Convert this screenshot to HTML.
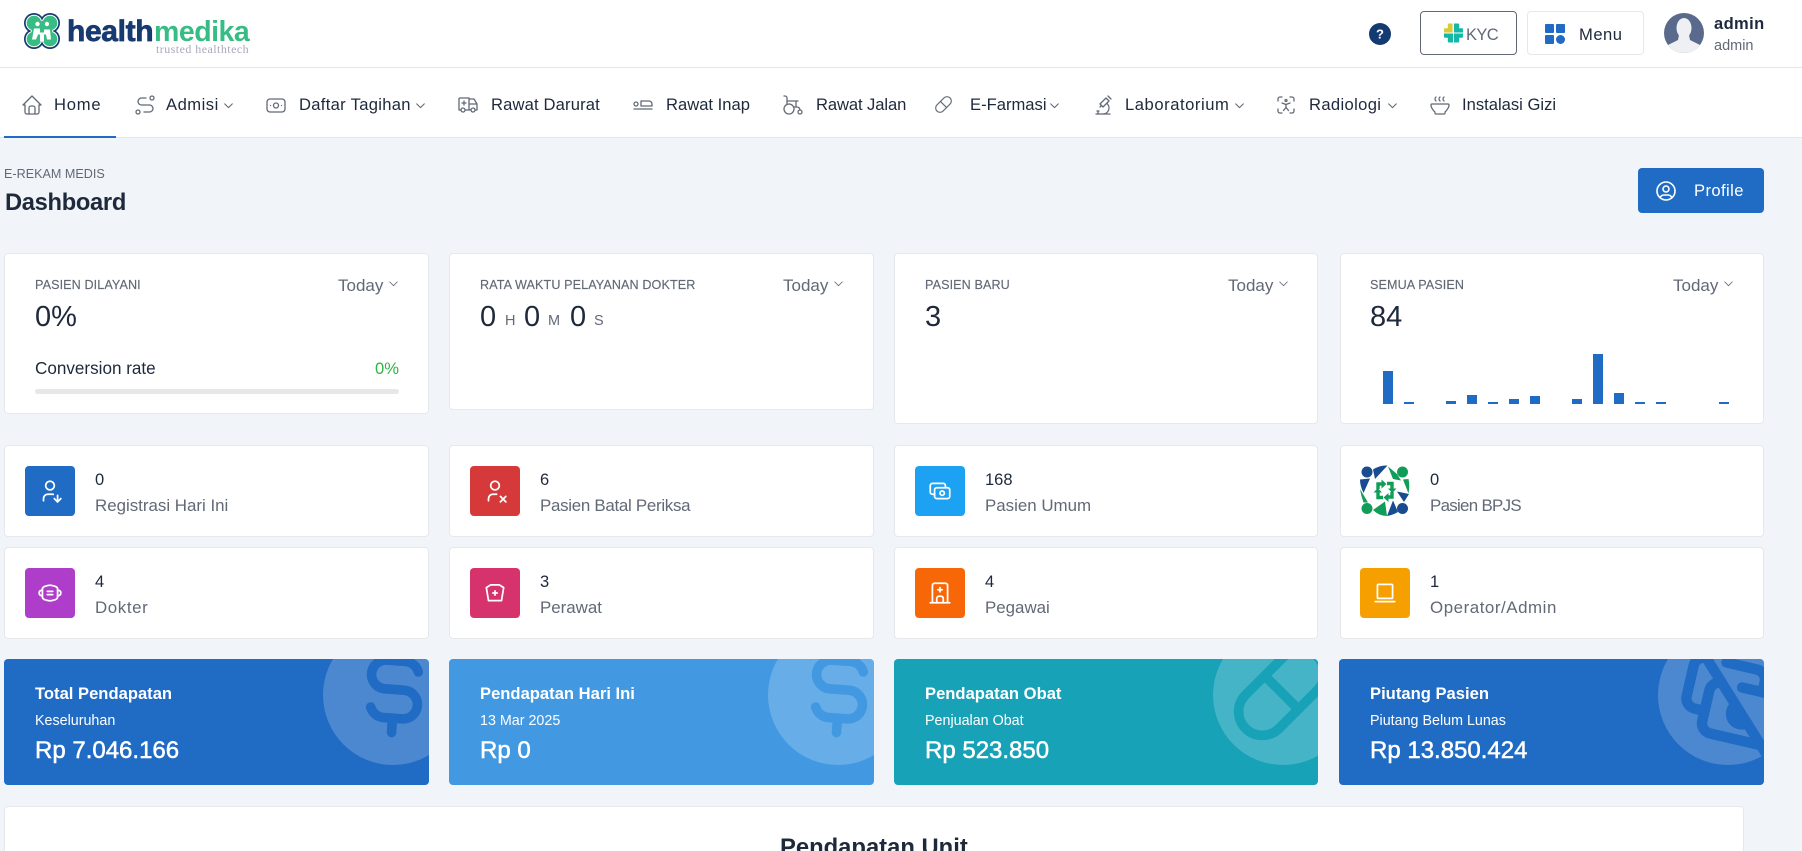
<!DOCTYPE html>
<html lang="id"><head><meta charset="utf-8"><title>Dashboard</title>
<style>
*{box-sizing:border-box}
html,body{margin:0;padding:0;width:1802px;height:851px;overflow:hidden;background:#f1f5f9;font-family:"Liberation Sans",sans-serif;color:#1e293b}
#root{position:relative;width:1802px;height:851px;overflow:hidden;background:#f1f5f9}
.abs,.t,.c,svg.i{position:absolute}
.t{white-space:nowrap;line-height:20px;height:20px}
.c{background:#fff;border:1px solid #e6e8ec;border-radius:4px}
svg.i{fill:none;stroke-width:1.3;stroke-linecap:round;stroke-linejoin:round}
.n{font-size:16.6px;color:#1e293b}
svg.nv{stroke:#626976;width:24px;height:24px;top:93px}
svg.chev{stroke:#626976;width:13px;height:13px;top:99px;stroke-width:2}
.m{color:#626976}
.h{font-size:12.6px;color:#626976;letter-spacing:.1px;-webkit-text-stroke:.15px #626976}
.td{font-size:17px;color:#626976;top:276px}
.big{font-size:29px;line-height:34px;height:34px;top:300px}
.ic{position:absolute;width:50px;height:50px;border-radius:4px}
.ic svg{position:absolute;left:12px;top:12px;width:26px;height:26px;fill:none;stroke:#fff;stroke-width:1.6;stroke-linecap:round;stroke-linejoin:round}
.v{font-size:16.5px}
.l{font-size:16.9px;color:#626976}
.rev{position:absolute;top:659px;width:425px;height:126px;border-radius:4px;overflow:hidden;color:#fff}
.rev .o{position:absolute;left:319px;top:-34px;width:140px;height:140px;border-radius:50%;background:rgba(255,255,255,.2)}
.rev svg{position:absolute;fill:none;stroke-width:2;stroke-linecap:round;stroke-linejoin:round}
.rt{left:31px;top:25px;font-size:16.6px;font-weight:700}
.rs{left:31px;top:52px;font-size:14.3px}
.rv{left:31px;top:80px;font-size:24px;line-height:24px;height:24px;-webkit-text-stroke:.5px #fff}
.b{position:absolute;width:10px;background:#206bc4}
</style></head><body><div id="root">

<!-- header -->
<div class="abs" style="left:0;top:0;width:1802px;height:68px;background:#fff;border-bottom:1px solid #e3e6ea"></div>
<svg class="abs" style="left:23px;top:12px" width="38" height="38" viewBox="0 0 38 38">
<g fill="#173a70"><circle cx="11" cy="11" r="10"/><circle cx="27" cy="11" r="10"/><circle cx="11" cy="27" r="10"/><circle cx="27" cy="27" r="10"/></g>
<g fill="#fff"><circle cx="11" cy="11" r="8.3"/><circle cx="27" cy="11" r="8.3"/><circle cx="11" cy="27" r="8.3"/><circle cx="27" cy="27" r="8.3"/></g>
<g fill="#37bd84"><circle cx="11" cy="11" r="7.3"/><circle cx="27" cy="11" r="7.3"/><circle cx="11" cy="27" r="7.3"/><circle cx="27" cy="27" r="7.3"/><rect x="9" y="9" width="20" height="20"/></g>
<g fill="#fff"><circle cx="14.5" cy="12" r="2.2"/><circle cx="24" cy="12" r="2.2"/><path d="M11 16.500h6v4h4v-3h6l1 10h-4l-1-5h-2v7h-4v-7h-2l-2 5h-4z"/></g>
</svg>
<div class="t" style="left:67px;top:17px;height:30px;line-height:30px;font-size:30px;font-weight:700;color:#173a70;letter-spacing:-.35px;-webkit-text-stroke:.7px #173a70">health</div>
<div class="t" style="left:154px;top:17px;height:30px;line-height:30px;font-size:28.5px;font-weight:700;color:#37bd84;letter-spacing:-.5px">medika</div>
<div class="t" style="left:156px;top:39px;font-family:'Liberation Serif',serif;font-size:12px;letter-spacing:.45px;color:#a8a8bd">trusted healthtech</div>

<svg class="abs" style="left:1369px;top:23px" width="22" height="22" viewBox="0 0 22 22"><circle cx="11" cy="11" r="11" fill="#143a72"/><text x="11" y="15.500" text-anchor="middle" font-family="Liberation Sans" font-weight="700" font-size="13" fill="#fff">?</text></svg>

<div class="abs" style="left:1420px;top:11px;width:97px;height:44px;border:1px solid #626976;border-radius:4px;background:#fff"></div>
<svg class="abs" style="left:1444px;top:23px" width="19" height="20" viewBox="0 0 20 20"><path fill="#d9cb35" d="M4 1a1 1 0 0 1 1-1h4v9.500H0V6a1 1 0 0 1 1-1h3z"/><path fill="#14b8a6" d="M10.500 0H15a1 1 0 0 1 1 1v4h3a1 1 0 0 1 1 1v3.500h-9.500z"/><path fill="#14b8a6" d="M0 10.500h9.500V20H5a1 1 0 0 1-1-1v-4H1a1 1 0 0 1-1-1z"/><path fill="#14b8a6" d="M10.500 10.500H20V14a1 1 0 0 1-1 1h-3v4a1 1 0 0 1-1 1h-4.500z"/></svg>
<div class="t" style="left:1466px;top:25px;font-size:16.5px;color:#626976;letter-spacing:-.6px">KYC</div>

<div class="abs" style="left:1527px;top:11px;width:117px;height:44px;border:1px solid #e6e8ec;border-radius:4px;background:#fff"></div>
<svg class="abs" style="left:1545px;top:24px" width="20" height="20" viewBox="0 0 20 20" fill="#206bc4"><rect width="9" height="9" rx="1"/><rect x="11" width="9" height="9" rx="1"/><rect y="11" width="9" height="9" rx="1"/><circle cx="15.500" cy="15.500" r="4.500"/></svg>
<div class="t" style="left:1579px;top:25px;font-size:16.6px;letter-spacing:.5px">Menu</div>

<svg class="abs" style="left:1664px;top:13px" width="40" height="40" viewBox="0 0 40 40"><defs><clipPath id="av"><circle cx="20" cy="20" r="20"/></clipPath></defs><g clip-path="url(#av)"><rect width="40" height="40" fill="#5a6a8c"/><ellipse cx="20" cy="15" rx="7.500" ry="10" fill="#eef0f3"/><path d="M15 22h10l1 5 10 5v8H4v-8l10-5z" fill="#eef0f3"/></g></svg>
<div class="t" style="left:1714px;top:14px;font-size:16.5px;font-weight:700;letter-spacing:.4px">admin</div>
<div class="t m" style="left:1714px;top:36px;font-size:14.5px">admin</div>

<!-- nav -->
<div class="abs" style="left:0;top:68px;width:1802px;height:70px;background:#fff;border-bottom:1px solid #e3e6ea"></div>
<div class="abs" style="left:4px;top:136px;width:112px;height:2px;background:#206bc4"></div>

<svg class="i nv" style="left:20px" viewBox="0 0 24 24"><path d="M5 12l-2 0l9 -9l9 9l-2 0"/><path d="M5 12v7a2 2 0 0 0 2 2h10a2 2 0 0 0 2 -2v-7"/><path d="M9 21v-6a2 2 0 0 1 2 -2h2a2 2 0 0 1 2 2v6"/></svg>
<div class="t n" style="left:54px;top:95px;letter-spacing:.8px">Home</div>
<svg class="i nv" style="left:133px" viewBox="0 0 24 24"><path d="M3 19a2 2 0 1 0 4 0a2 2 0 0 0 -4 0"/><path d="M19 7a2 2 0 1 0 0 -4a2 2 0 0 0 0 4z"/><path d="M11 19h5.500a3.500 3.500 0 0 0 0 -7h-8a3.500 3.500 0 0 1 0 -7h4.500"/></svg>
<div class="t n" style="left:166px;top:95px;letter-spacing:.5px">Admisi</div>
<svg class="i chev" style="left:222px" viewBox="0 0 24 24"><path d="M5 9l7 7l7 -7"/></svg>
<svg class="i nv" style="left:264px" viewBox="0 0 24 24"><rect x="3" y="6" width="18" height="13" rx="3"/><circle cx="12" cy="12.500" r="2.500"/><path d="M6.500 12.500h.01M17.500 12.500h.01"/></svg>
<div class="t n" style="left:299px;top:95px;letter-spacing:.3px">Daftar Tagihan</div>
<svg class="i chev" style="left:414px" viewBox="0 0 24 24"><path d="M5 9l7 7l7 -7"/></svg>
<svg class="i nv" style="left:456px" viewBox="0 0 24 24"><path d="M7 17m-2 0a2 2 0 1 0 4 0a2 2 0 1 0 -4 0"/><path d="M17 17m-2 0a2 2 0 1 0 4 0a2 2 0 1 0 -4 0"/><path d="M5 17h-2v-11a1 1 0 0 1 1 -1h9v12m-4 0h6m4 0h2v-6h-8m0 -5h5l3 5"/><path d="M6 10h4m-2 -2v4"/></svg>
<div class="t n" style="left:491px;top:95px;letter-spacing:.15px">Rawat Darurat</div>
<svg class="i nv" style="left:631px" viewBox="0 0 24 24"><path d="M5 11m-2 0a2 2 0 1 0 4 0a2 2 0 1 0 -4 0"/><path d="M10 13h11v-2a3 3 0 0 0 -3 -3h-8v5z"/><path d="M3 16h18"/></svg>
<div class="t n" style="left:666px;top:95px">Rawat Inap</div>
<svg class="i nv" style="left:781px" viewBox="0 0 24 24"><path d="M8 16m-5 0a5 5 0 1 0 10 0a5 5 0 1 0 -10 0"/><path d="M19 19m-2 0a2 2 0 1 0 4 0a2 2 0 1 0 -4 0"/><path d="M19 17a3 3 0 0 0 -3 -3h-3.400"/><path d="M3 3h1a2 2 0 0 1 2 2v6"/><path d="M6 8h11"/><path d="M15 8v6"/></svg>
<div class="t n" style="left:816px;top:95px;letter-spacing:-.1px">Rawat Jalan</div>
<svg class="i nv" style="left:933px;width:21px;height:21px;top:94px" viewBox="0 0 24 24"><path d="M4.500 12.500l8 -8a4.940 4.940 0 0 1 7 7l-8 8a4.940 4.940 0 0 1 -7 -7"/><path d="M8.500 8.500l7 7"/></svg>
<div class="t n" style="left:970px;top:95px">E-Farmasi</div>
<svg class="i chev" style="left:1048px" viewBox="0 0 24 24"><path d="M5 9l7 7l7 -7"/></svg>
<svg class="i nv" style="left:1091px" viewBox="0 0 24 24"><path d="M5 21h14"/><path d="M6 18h2"/><path d="M7 18v3"/><path d="M9 11l3 3l6 -6l-3 -3z"/><path d="M10.500 12.500l-1.500 1.500"/><path d="M17 3l3 3"/><path d="M12 21a6 6 0 0 0 3.715 -10.712"/></svg>
<div class="t n" style="left:1125px;top:95px;letter-spacing:.55px">Laboratorium</div>
<svg class="i chev" style="left:1233px" viewBox="0 0 24 24"><path d="M5 9l7 7l7 -7"/></svg>
<svg class="i nv" style="left:1274px" viewBox="0 0 24 24"><path d="M4 8v-2a2 2 0 0 1 2 -2h2"/><path d="M4 16v2a2 2 0 0 0 2 2h2"/><path d="M16 4h2a2 2 0 0 1 2 2v2"/><path d="M16 20h2a2 2 0 0 0 2 -2v-2"/><circle cx="12" cy="7.500" r="1"/><path d="M8 10l4 1.500l4 -1.500"/><path d="M12 11.500v3l-2.500 3M12 14.500l2.500 3"/></svg>
<div class="t n" style="left:1309px;top:95px;letter-spacing:.35px">Radiologi</div>
<svg class="i chev" style="left:1386px" viewBox="0 0 24 24"><path d="M5 9l7 7l7 -7"/></svg>
<svg class="i nv" style="left:1428px" viewBox="0 0 24 24"><path d="M4 11h16a1 1 0 0 1 1 1v.5c0 1.500 -2.517 5.573 -4 6.500v1a1 1 0 0 1 -1 1h-8a1 1 0 0 1 -1 -1v-1c-1.687 -1.054 -4 -5 -4 -6.500v-.5a1 1 0 0 1 1 -1z"/><path d="M12 4a2.400 2.400 0 0 0 -1 2a2.400 2.400 0 0 0 1 2"/><path d="M16 4a2.400 2.400 0 0 0 -1 2a2.400 2.400 0 0 0 1 2"/><path d="M8 4a2.400 2.400 0 0 0 -1 2a2.400 2.400 0 0 0 1 2"/></svg>
<div class="t n" style="left:1462px;top:95px">Instalasi Gizi</div>

<!-- title -->
<div class="t" style="left:4px;top:164px;font-size:12.6px;color:#626976">E-REKAM MEDIS</div>
<div class="t" style="left:5px;top:188px;height:30px;line-height:30px;font-size:23.7px;font-weight:700;color:#1e293b;letter-spacing:-.3px">Dashboard</div>
<div class="abs" style="left:1638px;top:168px;width:126px;height:45px;background:#206bc4;border-radius:4px"></div>
<svg class="i" style="left:1654px;top:179px;stroke:#fff;stroke-width:1.6" width="24" height="24" viewBox="0 0 24 24"><path d="M12 12m-9 0a9 9 0 1 0 18 0a9 9 0 1 0 -18 0"/><path d="M12 10m-3 0a3 3 0 1 0 6 0a3 3 0 1 0 -6 0"/><path d="M6.168 18.849a4 4 0 0 1 3.832 -2.849h4a4 4 0 0 1 3.834 2.855"/></svg>
<div class="t" style="left:1694px;top:181px;font-size:16.6px;color:#fff;letter-spacing:.4px">Profile</div>

<!-- top cards -->
<div class="c" style="left:4px;top:253px;width:425px;height:161px"></div>
<div class="c" style="left:449px;top:253px;width:425px;height:157px"></div>
<div class="c" style="left:894px;top:253px;width:424px;height:171px"></div>
<div class="c" style="left:1340px;top:253px;width:424px;height:171px"></div>

<div class="t h" style="left:35px;top:275px">PASIEN DILAYANI</div>
<div class="t td" style="left:338px">Today</div>
<svg class="i chev" style="left:387px;top:277px;stroke-width:1.6" viewBox="0 0 24 24"><path d="M5 9l7 7l7 -7"/></svg>
<div class="t big" style="left:35px">0%</div>
<div class="t" style="left:35px;top:359px;font-size:17.1px">Conversion rate</div>
<div class="t" style="left:375px;top:359px;font-size:16.6px;color:#2fb344">0%</div>
<div class="abs" style="left:35px;top:389px;width:364px;height:5px;border-radius:3px;background:#e6e7e9"></div>

<div class="t h" style="left:480px;top:275px">RATA WAKTU PELAYANAN DOKTER</div>
<div class="t td" style="left:783px">Today</div>
<svg class="i chev" style="left:832px;top:277px;stroke-width:1.6" viewBox="0 0 24 24"><path d="M5 9l7 7l7 -7"/></svg>
<div class="t big" style="left:480px">0</div><div class="t m" style="left:505px;top:311px;font-size:14.5px">H</div>
<div class="t big" style="left:524px">0</div><div class="t m" style="left:548px;top:311px;font-size:14.5px">M</div>
<div class="t big" style="left:570px">0</div><div class="t m" style="left:594px;top:311px;font-size:14.5px">S</div>

<div class="t h" style="left:925px;top:275px">PASIEN BARU</div>
<div class="t td" style="left:1228px">Today</div>
<svg class="i chev" style="left:1277px;top:277px;stroke-width:1.6" viewBox="0 0 24 24"><path d="M5 9l7 7l7 -7"/></svg>
<div class="t big" style="left:925px">3</div>

<div class="t h" style="left:1370px;top:275px">SEMUA PASIEN</div>
<div class="t td" style="left:1673px">Today</div>
<svg class="i chev" style="left:1722px;top:277px;stroke-width:1.6" viewBox="0 0 24 24"><path d="M5 9l7 7l7 -7"/></svg>
<div class="t big" style="left:1370px">84</div>

<div class="b" style="left:1383px;top:371px;height:33px"></div>
<div class="b" style="left:1404px;top:402px;height:2px"></div>
<div class="b" style="left:1446px;top:401px;height:3px"></div>
<div class="b" style="left:1467px;top:395px;height:9px"></div>
<div class="b" style="left:1488px;top:402px;height:2px"></div>
<div class="b" style="left:1509px;top:399px;height:5px"></div>
<div class="b" style="left:1530px;top:396px;height:8px"></div>
<div class="b" style="left:1572px;top:399px;height:5px"></div>
<div class="b" style="left:1593px;top:354px;height:50px"></div>
<div class="b" style="left:1614px;top:393px;height:11px"></div>
<div class="b" style="left:1635px;top:402px;height:2px"></div>
<div class="b" style="left:1656px;top:402px;height:2px"></div>
<div class="b" style="left:1719px;top:402px;height:2px"></div>

<!-- stat rows -->
<div class="c" style="left:4px;top:445px;width:425px;height:92px"></div>
<div class="c" style="left:449px;top:445px;width:425px;height:92px"></div>
<div class="c" style="left:894px;top:445px;width:424px;height:92px"></div>
<div class="c" style="left:1340px;top:445px;width:424px;height:92px"></div>
<div class="c" style="left:4px;top:547px;width:425px;height:92px"></div>
<div class="c" style="left:449px;top:547px;width:425px;height:92px"></div>
<div class="c" style="left:894px;top:547px;width:424px;height:92px"></div>
<div class="c" style="left:1340px;top:547px;width:424px;height:92px"></div>

<div class="ic" style="left:25px;top:466px;background:#206bc4"><svg viewBox="0 0 24 24"><path d="M8 7a4 4 0 1 0 8 0a4 4 0 0 0 -8 0"/><path d="M6 21v-2a4 4 0 0 1 4 -4h4c.342 0 .674 .043 .99 .124"/><path d="M19 16v6"/><path d="M22 19l-3 3l-3 -3"/></svg></div>
<div class="t v" style="left:95px;top:470px">0</div><div class="t l" style="left:95px;top:496px">Registrasi Hari Ini</div>

<div class="ic" style="left:470px;top:466px;background:#d63939"><svg viewBox="0 0 24 24"><path d="M8 7a4 4 0 1 0 8 0a4 4 0 0 0 -8 0"/><path d="M6 21v-2a4 4 0 0 1 4 -4h3.500"/><path d="M22 22l-5 -5"/><path d="M17 22l5 -5"/></svg></div>
<div class="t v" style="left:540px;top:470px">6</div><div class="t l" style="left:540px;top:496px;letter-spacing:-.28px">Pasien Batal Periksa</div>

<div class="ic" style="left:915px;top:466px;background:#1da1f2"><svg viewBox="0 0 24 24"><path d="M7 9m0 2a2 2 0 0 1 2 -2h10a2 2 0 0 1 2 2v6a2 2 0 0 1 -2 2h-10a2 2 0 0 1 -2 -2z"/><path d="M14 14m-2 0a2 2 0 1 0 4 0a2 2 0 1 0 -4 0"/><path d="M17 9v-2a2 2 0 0 0 -2 -2h-10a2 2 0 0 0 -2 2v6a2 2 0 0 0 2 2h2"/></svg></div>
<div class="t v" style="left:985px;top:470px">168</div><div class="t l" style="left:985px;top:496px">Pasien Umum</div>

<svg class="abs" style="left:1360px;top:464px" width="50" height="53" viewBox="0 0 50 53">
<g fill="#1a4a8f"><circle cx="7" cy="8" r="5.500"/><circle cx="42.500" cy="44.500" r="5.500"/><path d="M13 5.500Q20 1 27.500 1.500L15 15zM0 15.500L10 14.500 3.500 29Q0 22 0 15.500zM49 30L44 38 37 27.500zM27 52Q33 51 38 48L33 36.500z"/></g>
<g fill="#0f9d58"><circle cx="42.500" cy="8" r="5.500"/><circle cx="7" cy="44.500" r="5.500"/><path d="M28 2.500L37 10 41 16.500 33 15zM0 25L8 38.500H3.500Q1 32 0 25zM43 15.500L48.500 15Q50 22 48.500 29.500zM13 46L25 37.500 27 52Q19 52 13 46z"/>
<path fill="none" stroke="#0f9d58" stroke-width="3.400" d="M18 25v-5h4M27 19.500h5v5M32 28v5h-4M23 33.500h-5v-5"/>
<path d="M21.500 15.500l5 4.500-5 4.500zM28.500 38l-5-4.500 5-4.500zM28 24.500h8.500l-4.250 4.500zM22 28.500h-8.500l4.250-4.500z"/></g>
</svg>
<div class="t v" style="left:1430px;top:470px">0</div><div class="t l" style="left:1430px;top:496px;letter-spacing:-.7px">Pasien BPJS</div>

<div class="ic" style="left:25px;top:568px;background:#ae3ec9"><svg viewBox="0 0 24 24"><path d="M5 9a4 3 0 0 1 3.500 -3.500c2.500 -1 4.500 -1 7 0a4 3 0 0 1 3.500 3.500v6a4 3 0 0 1 -3.500 3.500c-2.500 1 -4.500 1 -7 0a4 3 0 0 1 -3.500 -3.500z"/><path d="M5 9.500c-2 0 -3 1 -3 2.500s1 2.500 3 2.500M19 9.500c2 0 3 1 3 2.500s-1 2.500 -3 2.500"/><path d="M9.500 10.500h5M9.500 13.500h5"/></svg></div>
<div class="t v" style="left:95px;top:572px">4</div><div class="t l" style="left:95px;top:598px;letter-spacing:.6px">Dokter</div>

<div class="ic" style="left:470px;top:568px;background:#d6336c"><svg viewBox="0 0 24 24"><path d="M8 4.500h8l4 2.500-2 12h-12l-2 -12z"/><path d="M10 12h4"/><path d="M12 10v4"/></svg></div>
<div class="t v" style="left:540px;top:572px">3</div><div class="t l" style="left:540px;top:598px">Perawat</div>

<div class="ic" style="left:915px;top:568px;background:#f76707"><svg viewBox="0 0 24 24"><path d="M3 21l18 0"/><path d="M5 21v-16a2 2 0 0 1 2 -2h10a2 2 0 0 1 2 2v16"/><path d="M9 21v-4a2 2 0 0 1 2 -2h2a2 2 0 0 1 2 2v4"/><path d="M10 9l4 0"/><path d="M12 7l0 4"/></svg></div>
<div class="t v" style="left:985px;top:572px">4</div><div class="t l" style="left:985px;top:598px">Pegawai</div>

<div class="ic" style="left:1360px;top:568px;background:#f59f00"><svg viewBox="0 0 24 24"><path d="M3 20l18 0"/><path d="M5 4m0 1a1 1 0 0 1 1 -1h12a1 1 0 0 1 1 1v11a1 1 0 0 1 -1 1h-12a1 1 0 0 1 -1 -1z"/></svg></div>
<div class="t v" style="left:1430px;top:572px">1</div><div class="t l" style="left:1430px;top:598px;letter-spacing:.55px">Operator/Admin</div>

<!-- revenue -->
<div class="rev" style="left:4px;background:#206bc4"><div class="o"></div>
<svg viewBox="0 0 24 24" stroke="#206bc4" style="left:333px;top:-27px;width:115px;height:115px;transform:rotate(4deg)"><path d="M16.700 8a3 3 0 0 0 -2.700 -2h-4a3 3 0 0 0 0 6h4a3 3 0 0 1 0 6h-4a3 3 0 0 1 -2.700 -2"/><path d="M12 3v3m0 12v3"/></svg>
<div class="t rt">Total Pendapatan</div><div class="t rs">Keseluruhan</div><div class="t rv">Rp 7.046.166</div></div>

<div class="rev" style="left:449px;background:#4299e1"><div class="o"></div>
<svg viewBox="0 0 24 24" stroke="#4299e1" style="left:333px;top:-27px;width:115px;height:115px;transform:rotate(4deg)"><path d="M16.700 8a3 3 0 0 0 -2.700 -2h-4a3 3 0 0 0 0 6h4a3 3 0 0 1 0 6h-4a3 3 0 0 1 -2.700 -2"/><path d="M12 3v3m0 12v3"/></svg>
<div class="t rt">Pendapatan Hari Ini</div><div class="t rs">13 Mar 2025</div><div class="t rv">Rp 0</div></div>

<div class="rev" style="left:894px;width:424px;background:#17a2b8"><div class="o"></div>
<svg viewBox="0 0 24 24" stroke="#17a2b8" style="left:330px;top:-24px;width:115px;height:115px"><path d="M4.500 12.500l8 -8a4.940 4.940 0 0 1 7 7l-8 8a4.940 4.940 0 0 1 -7 -7"/><path d="M8.500 8.500l7 7"/></svg>
<div class="t rt">Pendapatan Obat</div><div class="t rs">Penjualan Obat</div><div class="t rv">Rp 523.850</div></div>

<div class="rev" style="left:1339px;background:#206bc4"><div class="o"></div>
<svg viewBox="0 0 24 24" stroke="#206bc4" style="left:332px;top:-20px;width:125px;height:125px;transform:rotate(13deg)"><path d="M13 9h6a2 2 0 0 1 2 2v6m-2 2h-10a2 2 0 0 1 -2 -2v-6a2 2 0 0 1 2 -2"/><path d="M12.582 12.590a2 2 0 0 0 2.830 2.826"/><path d="M17 9v-2a2 2 0 0 0 -2 -2h-6m-4 0a2 2 0 0 0 -2 2v6a2 2 0 0 0 2 2h2"/><path d="M3 3l18 18"/></svg>
<div class="t rt">Piutang Pasien</div><div class="t rs">Piutang Belum Lunas</div><div class="t rv">Rp 13.850.424</div></div>

<!-- bottom card -->
<div class="abs" style="left:4px;top:806px;width:1740px;height:60px;background:#fff;border:1px solid #e6e8ec;border-radius:4px"></div>
<div class="t" style="left:780px;top:835px;height:26px;line-height:26px;font-size:23.8px;font-weight:700;color:#1e293b">Pendapatan Unit</div>
</div></body></html>
